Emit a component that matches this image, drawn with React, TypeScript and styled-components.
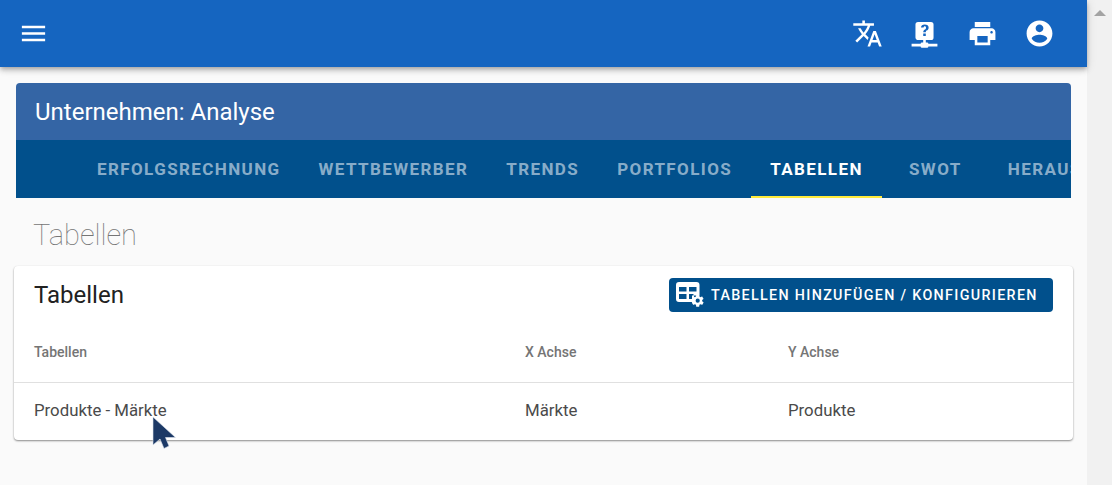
import React from "react";
import styled, { createGlobalStyle } from "styled-components";

const Global = createGlobalStyle`
  html, body {
    margin: 0;
    padding: 0;
    height: 100%;
    overflow: hidden;
    background: #fafafa;
    font-family: "Roboto", sans-serif;
  }
`;

const icons = {
  menu: "M3 18h18v-2H3v2zm0-5h18v-2H3v2zm0-7v2h18V6H3z",
  translate:
    "M12.87 15.07l-2.54-2.51.03-.03c1.74-1.94 2.98-4.17 3.71-6.53H17V4h-7V2H8v2H1v1.99h11.17C11.5 7.92 10.44 9.75 9 11.35 8.07 10.32 7.3 9.19 6.69 8h-2c.73 1.63 1.73 3.17 2.98 4.56l-5.09 5.02L4 19l5-5 3.11 3.11.76-2.04zM18.5 10h-2L12 22h2l1.12-3h4.75L21 22h2l-4.5-12zm-2.62 7l1.62-4.33L19.12 17h-3.24z",
  help:
    "M17,3A2,2 0 0,1 19,5V15A2,2 0 0,1 17,17H13V19H14A1,1 0 0,1 15,20H22V22H15A1,1 0 0,1 14,23H10A1,1 0 0,1 9,22H2V20H9A1,1 0 0,1 10,19H11V17H7C5.89,17 5,16.1 5,15V5A2,2 0 0,1 7,3H17M12.19,5C11.32,5 10.62,5.2 10.08,5.59C9.56,6 9.3,6.57 9.31,7.36L9.32,7.39H11.25C11.26,7.09 11.35,6.86 11.53,6.7C11.71,6.55 11.93,6.47 12.19,6.47C12.5,6.47 12.76,6.57 12.94,6.75C13.12,6.94 13.2,7.2 13.2,7.5C13.2,7.82 13.13,8.09 12.97,8.32C12.83,8.55 12.62,8.75 12.36,8.91C11.85,9.25 11.5,9.55 11.31,9.82C11.11,10.08 11,10.5 11,11H13C13,10.69 13.04,10.44 13.13,10.26C13.22,10.07 13.39,9.9 13.64,9.74C14.09,9.5 14.46,9.21 14.75,8.81C15.04,8.41 15.19,8 15.19,7.5C15.19,6.74 14.92,6.13 14.38,5.68C13.85,5.23 13.12,5 12.19,5M11,12V14H13V12H11Z",
  print:
    "M19 8H5c-1.66 0-3 1.34-3 3v6h4v4h12v-4h4v-6c0-1.66-1.34-3-3-3zm-3 11H8v-5h8v5zm3-7c-.55 0-1-.45-1-1s.45-1 1-1 1 .45 1 1-.45 1-1 1zm-1-9H6v4h12V3z",
  account:
    "M12 2C6.48 2 2 6.48 2 12s4.48 10 10 10 10-4.48 10-10S17.52 2 12 2zm0 3c1.66 0 3 1.34 3 3s-1.34 3-3 3-3-1.34-3-3 1.34-3 3-3zm0 14.2c-2.5 0-4.71-1.28-6-3.22.03-1.99 4-3.08 6-3.08 1.99 0 5.97 1.09 6 3.08-1.29 1.94-3.5 3.22-6 3.22z",
};

const cog =
  "M12,15.5A3.5,3.5 0 0,1 8.5,12A3.5,3.5 0 0,1 12,8.5A3.5,3.5 0 0,1 15.5,12A3.5,3.5 0 0,1 12,15.5M19.43,12.97C19.47,12.65 19.5,12.33 19.5,12C19.5,11.67 19.47,11.34 19.43,11L21.54,9.37C21.73,9.22 21.78,8.95 21.66,8.73L19.66,5.27C19.54,5.05 19.27,4.96 19.05,5.05L16.56,6.05C16.04,5.66 15.5,5.32 14.87,5.07L14.5,2.42C14.46,2.18 14.25,2 14,2H10C9.75,2 9.54,2.18 9.5,2.42L9.13,5.07C8.5,5.32 7.96,5.66 7.44,6.05L4.95,5.05C4.73,4.96 4.46,5.05 4.34,5.27L2.34,8.73C2.21,8.95 2.27,9.22 2.46,9.37L4.57,11C4.53,11.34 4.5,11.67 4.5,12C4.5,12.33 4.53,12.65 4.57,12.97L2.46,14.63C2.27,14.78 2.21,15.05 2.34,15.27L4.34,18.73C4.46,18.95 4.73,19.03 4.95,18.95L7.44,17.94C7.96,18.34 8.5,18.68 9.13,18.93L9.5,21.58C9.54,21.82 9.75,22 10,22H14C14.25,22 14.46,21.82 14.5,21.58L14.87,18.93C15.5,18.67 16.04,18.34 16.56,17.94L19.05,18.95C19.27,19.03 19.54,18.95 19.66,18.73L21.66,15.27C21.78,15.05 21.73,14.78 21.54,14.63L19.43,12.97Z";

const tabs = [
  "Erfolgsrechnung",
  "Wettbewerber",
  "Trends",
  "Portfolios",
  "Tabellen",
  "SWOT",
  "Herausforderungen",
];

const App = () => {
  return (
    <>
      <Global />
      <Page>
        <Main>
          <Header>
            <HeaderIcon viewBox="0 0 24 24">
              <path d={icons.menu} />
            </HeaderIcon>
            <HeaderActions>
              <HeaderIcon viewBox="0 0 24 24">
                <path d={icons.translate} />
              </HeaderIcon>
              <HeaderIcon viewBox="0 0 24 24">
                <path d={icons.help} />
              </HeaderIcon>
              <HeaderIcon viewBox="0 0 24 24">
                <path d={icons.print} />
              </HeaderIcon>
              <HeaderIcon viewBox="0 0 24 24">
                <path d={icons.account} />
              </HeaderIcon>
            </HeaderActions>
          </Header>

          <Content>
            <AnalysisPanel>
              <AnalysisTitle>Unternehmen: Analyse</AnalysisTitle>
              <TabBar>
                {tabs.map((tab) => (
                  <Tab key={tab} $active={tab === "Tabellen"}>
                    {tab}
                  </Tab>
                ))}
              </TabBar>
            </AnalysisPanel>

            <PageTitle>Tabellen</PageTitle>

            <Card>
              <CardHeader>
                <CardTitle>Tabellen</CardTitle>
                <ConfigButton>
                  <TableCogIcon viewBox="0 0 29 26">
                    <path
                      fill="#fff"
                      fillRule="evenodd"
                      d="M3 0h17.5a3 3 0 0 1 3 3v10.5h-5.5v6.5H3a3 3 0 0 1-3-3V3a3 3 0 0 1 3-3zm0 5v4.5h7.5V5zm10 0v4.5h7.5V5zM3 12v5h7.5v-5zm10 0v5h3v-3.5h1.5V12z"
                    />
                    <path fill="#fff" transform="translate(14.5 11.5) scale(0.6)" d={cog} />
                  </TableCogIcon>
                  Tabellen hinzufügen / konfigurieren
                </ConfigButton>
              </CardHeader>

              <TableRow $head>
                <HeadCell>Tabellen</HeadCell>
                <HeadCell>X Achse</HeadCell>
                <HeadCell>Y Achse</HeadCell>
              </TableRow>
              <TableRow>
                <BodyCell>Produkte - Märkte</BodyCell>
                <BodyCell>Märkte</BodyCell>
                <BodyCell>Produkte</BodyCell>
              </TableRow>
            </Card>
          </Content>
        </Main>

        <Scrollbar>
          <ScrollArrow />
        </Scrollbar>

        <Cursor viewBox="0 0 25 36">
          <path
            d="M1 2V30L8 24L12 33.5L17 31L13.5 22.5H23.5Z"
            fill="#1c3966"
            stroke="#dfe5ee"
            strokeWidth="0.6"
          />
        </Cursor>
      </Page>
    </>
  );
};

export default App;

// ======== STYLED COMPONENTS ========

const Page = styled.div`
  position: relative;
  display: flex;
  width: 1112px;
  height: 485px;
  overflow: hidden;
`;

const Main = styled.div`
  flex: 1;
  min-width: 0;
  display: flex;
  flex-direction: column;
  background: #fafafa;
`;

const Header = styled.header`
  position: relative;
  z-index: 2;
  flex: 0 0 67px;
  display: flex;
  align-items: center;
  justify-content: space-between;
  padding: 0 32px 0 18px;
  background: #1565c0;
  box-shadow: 0 2px 4px -1px rgba(0, 0, 0, 0.2), 0 4px 5px rgba(0, 0, 0, 0.14),
    0 1px 10px rgba(0, 0, 0, 0.12);
`;

const HeaderActions = styled.div`
  display: flex;
  align-items: center;
  gap: 26.5px;
`;

const HeaderIcon = styled.svg`
  width: 31px;
  height: 31px;
  fill: #fff;
  flex: none;
`;

const Content = styled.main`
  padding: 16px 14px 0;
`;

const AnalysisPanel = styled.section`
  margin: 0 2px;
  border-radius: 4px 4px 0 0;
  overflow: hidden;
`;

const AnalysisTitle = styled.h2`
  margin: 0;
  height: 57px;
  padding: 0 19px;
  display: flex;
  align-items: center;
  background: #3465a5;
  color: #fff;
  font-size: 24px;
  font-weight: 400;
`;

const TabBar = styled.nav`
  height: 58px;
  padding-left: 62px;
  display: flex;
  background: #01508c;
  overflow: hidden;
`;

const Tab = styled.div<{ $active?: boolean }>`
  flex: none;
  min-width: 107px;
  box-sizing: border-box;
  padding: 0 19px;
  display: flex;
  align-items: center;
  justify-content: center;
  font-size: 17px;
  font-weight: 700;
  letter-spacing: 1.4px;
  text-transform: uppercase;
  color: ${({ $active }) => ($active ? "#fff" : "rgba(255, 255, 255, 0.55)")};
  border-bottom: 2px solid ${({ $active }) => ($active ? "#ffeb3b" : "transparent")};
  border-top: 2px solid transparent;
`;

const PageTitle = styled.h1`
  margin: 0;
  height: 68px;
  box-sizing: border-box;
  padding: 6px 0 0 19px;
  display: flex;
  align-items: center;
  font-size: 29px;
  font-weight: 100;
  color: #757575;
`;

const Card = styled.section`
  background: #fff;
  border-radius: 4px;
  box-shadow: 0 1px 2px rgba(0, 0, 0, 0.45), 0 0 1px rgba(0, 0, 0, 0.04);
`;

const CardHeader = styled.div`
  height: 58px;
  padding: 0 20px;
  display: flex;
  align-items: center;
  justify-content: space-between;
`;

const CardTitle = styled.h3`
  margin: 0;
  font-size: 24px;
  font-weight: 400;
  color: #212121;
`;

const ConfigButton = styled.button`
  width: 384px;
  height: 34px;
  padding: 0 7px;
  display: flex;
  align-items: center;
  gap: 6px;
  border: none;
  border-radius: 4px;
  background: #01508c;
  color: #fff;
  font-family: inherit;
  font-size: 14.3px;
  font-weight: 500;
  letter-spacing: 1.33px;
  text-transform: uppercase;
  white-space: nowrap;
`;

const TableCogIcon = styled.svg`
  width: 29px;
  height: 26px;
  flex: none;
`;

const TableRow = styled.div<{ $head?: boolean }>`
  display: grid;
  grid-template-columns: 491px 263px 1fr;
  align-items: center;
  box-sizing: border-box;
  height: ${({ $head }) => ($head ? "59px" : "57px")};
  padding: 0 20px ${({ $head }) => ($head ? "2px" : "4px")};
  border-bottom: ${({ $head }) => ($head ? "1px solid #e0e0e0" : "none")};
`;

const HeadCell = styled.div`
  font-size: 14px;
  font-weight: 500;
  color: #757575;
`;

const BodyCell = styled.div`
  font-size: 16.8px;
  color: #4a4a4a;
`;

const Scrollbar = styled.aside`
  flex: 0 0 25px;
  background: #f1f1f1;
  display: flex;
  justify-content: center;
  padding-top: 10px;
`;

const ScrollArrow = styled.div`
  width: 0;
  height: 0;
  border-left: 6px solid transparent;
  border-right: 6px solid transparent;
  border-bottom: 6px solid #a3a3a3;
`;

const Cursor = styled.svg`
  position: absolute;
  left: 152px;
  top: 415px;
  width: 25px;
  height: 36px;
`;
